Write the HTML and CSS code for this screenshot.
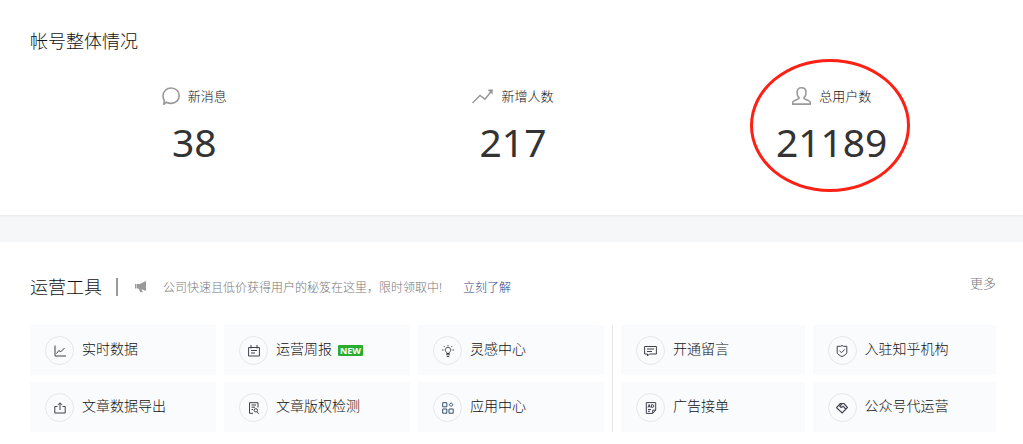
FILE: index.html
```html
<!DOCTYPE html>
<html lang="zh-CN">
<head>
<meta charset="utf-8">
<meta name="viewport" content="width=device-width, initial-scale=1">
<title>帐号整体情况</title>
<link rel="stylesheet" href="styles.css">
</head>
<body>
<section class="panel overview">
  <h2 class="title">帐号整体情况</h2>
  <div class="stats">
    <div class="stat">
      <div class="stat-label">
        <svg class="stat-icon" width="18" height="18" viewBox="0 0 18 18"><path d="M2.300 13.500C1.400 12 1 10.600 1 9C1 4.300 4.500 1 9.200 1C14 1 17.200 4.500 17.200 8.700C17.200 13 13.800 16.400 9.200 16.400C7.200 16.400 5.700 16 4.300 15.300L1.800 17.200L2.300 13.500Z" fill="none" stroke="#999" stroke-width="1.600"/></svg>
        <span>新消息</span>
      </div>
      <strong class="stat-value">38</strong>
    </div>
    <div class="stat">
      <div class="stat-label">
        <svg class="stat-icon" width="21" height="15" viewBox="0 0 21 15"><path d="M.5 14L8 6.500L13 10.200L19.500 2" fill="none" stroke="#999" stroke-width="1.500"/><path d="M15.500.8L20.800.3L20.600 5.500Z" fill="#999"/></svg>
        <span>新增人数</span>
      </div>
      <strong class="stat-value">217</strong>
    </div>
    <div class="stat marked">
      <div class="stat-label">
        <svg class="stat-icon" width="19" height="18" viewBox="0 0 19 18"><path d="M7.200 11.200C5.600 9.700 5 7.700 5 5.300C5 2.400 6.700.8 9.500.8S14 2.400 14 5.300C14 7.700 13.400 9.700 11.800 11.200C12 12.500 18.200 13.200 18.200 15.300V17.100H.8V15.300C.8 13.200 7 12.500 7.200 11.200Z" fill="none" stroke="#999" stroke-width="1.600"/></svg>
        <span>总用户数</span>
      </div>
      <strong class="stat-value">21189</strong>
    </div>
  </div>
</section>

<section class="panel tools">
  <header class="tools-head">
    <h2 class="title">运营工具</h2>
    <span class="bar"></span>
    <svg class="horn" width="12" height="12" viewBox="0 0 12 12" fill="#999"><path d="M0 3H1V7.500H0ZM1.500 3H5L9.800.6V9.400L5 7.500H1.500ZM9.800.3H11V9.800H9.800ZM3.500 7.500H6L8 11.200H5.500Z"/></svg>
    <p class="notice">公司快速且低价获得用户的秘笈在这里，限时领取中!</p>
    <a class="learn" href="#">立刻了解</a>
    <a class="more" href="#">更多</a>
  </header>
  <div class="groups">
    <div class="group three">
      <a class="card" href="#"><span class="disc"><svg width="12" height="12" viewBox="0 0 12 12"><path d="M1 .5V11H12M2.500 8.500L4.800 5.500L6.800 6.800L10.500 3"/></svg></span><span class="name">实时数据</span></a>
      <a class="card" href="#"><span class="disc"><svg width="12" height="12" viewBox="0 0 12 12"><path d="M.6 2.500H11.400V11H.6ZM3 0V3.500M9 0V3.500M3 5.500H9M3 8H7"/></svg></span><span class="name">运营周报</span><span class="new">NEW</span></a>
      <a class="card" href="#"><span class="disc"><svg width="12" height="12" viewBox="0 0 12 12"><path d="M4.700 8.500V7.300A2.700 2.700 0 1 1 7.300 7.300V8.500ZM4.200 9.700H7.800M4.800 11.500H7.200M6 0V1M2 1.200L2.800 2M10 1.200L9.200 2M0 5H1.500M10.500 5H12"/></svg></span><span class="name">灵感中心</span></a>
      <a class="card" href="#"><span class="disc"><svg width="12" height="12" viewBox="0 0 12 12"><path d="M3.500 4.500H.8V11H11.200V4.500H8.500M6 8V1M3.800 3L6 .8L8.200 3"/></svg></span><span class="name">文章数据导出</span></a>
      <a class="card" href="#"><span class="disc"><svg width="12" height="12" viewBox="0 0 12 12"><path d="M5 11.300H1.500V.7H10V5.500M3.500 3H8M3.500 5.200H7M3.500 7.500H5M9 9.800L10.800 11.800"/><circle cx="7.800" cy="8.300" r="1.700"/></svg></span><span class="name">文章版权检测</span></a>
      <a class="card" href="#"><span class="disc"><svg class="blue" width="12" height="12" viewBox="0 0 12 12"><path d="M.7.7H4.800V4.800H.7ZM.7 7H4.800V11.200H.7ZM7 7H11.200V11.200H7ZM9.100.8L11 2.700L9.100 4.600L7.200 2.700Z"/></svg></span><span class="name">应用中心</span></a>
    </div>
    <div class="divider"></div>
    <div class="group two">
      <a class="card" href="#"><span class="disc"><svg width="13" height="12" viewBox="0 0 13 12"><path d="M.6 1.500H12.400V9H5.500L3.500 11V9H.6ZM3 4H10M3 6.500H8"/></svg></span><span class="name">开通留言</span></a>
      <a class="card" href="#"><span class="disc"><svg width="12" height="12" viewBox="0 0 12 12"><path d="M6 .5L7.500 1.300H10.800V7.500C10.800 9.500 8 10.400 6 11.600C4 10.400 1.200 9.500 1.200 7.500V1.300H4.500ZM3.500 5.800L5.500 7.700L8.700 4.300"/></svg></span><span class="name">入驻知乎机构</span></a>
      <a class="card" href="#"><span class="disc"><svg width="12" height="12" viewBox="0 0 12 12"><path d="M1.300.6H10.700V8.200L7.700 11.400H1.300ZM7.700 11.400V8.200H10.700M3 7.500H6M3 9.300H5M3 5.500L4.200 2.500L5.400 5.500M3.500 4.600H5M6.600 2.600V5.400H7.500C9.300 5.400 9.300 2.600 7.500 2.600Z"/></svg></span><span class="name">广告接单</span></a>
      <a class="card" href="#"><span class="disc"><svg class="bold" width="12" height="12" viewBox="0 0 12 12"><path d="M.5 5.700L4.300 1.500H8L11.500 5.500L6.200 11ZM6.200 1.700L3.800 4.200L5.200 5.500L7 4.200L9.800 7"/></svg></span><span class="name">公众号代运营</span></a>
    </div>
  </div>
</section>
</body>
</html>
```
FILE: styles.css
```css
*,
*::after {
  box-sizing: border-box;
}

body {
  margin: 0;
  background: #f6f7f9;
  color: #111;
  font-family: "Noto Sans", "Noto Sans CJK SC", sans-serif;
  font-size: 14px;
  font-weight: 300;
}

a {
  color: inherit;
  text-decoration: none;
}

svg {
  flex: none;
}

.panel {
  background: #fff;
}

.title {
  margin: 0;
  font-size: 18px;
  font-weight: 300;
  line-height: 26px;
}

.overview {
  padding: 28px 0 49px;
  box-shadow: 0 1px 2px rgba(0, 0, 0, 0.06);
}

.overview .title {
  padding: 0 30px;
}

.stats {
  display: grid;
  grid-template-columns: repeat(3, 1fr);
  margin-top: 32px;
  padding: 0 32px 0 35px;
}

.stat {
  position: relative;
  display: flex;
  flex-direction: column;
  align-items: center;
}

.stat-label {
  display: flex;
  align-items: center;
  gap: 8px;
  height: 20px;
  font-size: 13px;
  line-height: 20px;
}

.stat-value {
  margin-top: 12px;
  color: #333;
  font-size: 39px;
  font-weight: 400;
  line-height: 48px;
}

.marked::after {
  content: "";
  position: absolute;
  top: -27px;
  left: 50%;
  width: 160px;
  height: 133px;
  margin-left: -82px;
  border: 3px solid #fd2014;
  border-radius: 50%;
}

.tools {
  margin-top: 27px;
  padding: 32px 27px 24px 30px;
}

.tools-head {
  display: flex;
  align-items: center;
  height: 26px;
}

.bar {
  width: 2px;
  height: 18px;
  margin: 0 17px 0 14px;
  background: #999;
}

.notice {
  margin: 0 21px 0 16px;
  color: #777;
  font-size: 12px;
}

.learn {
  color: #2f4685;
  font-size: 12px;
}

.more {
  align-self: flex-start;
  margin-left: auto;
  color: #777;
  font-size: 13px;
  line-height: 18px;
}

.groups {
  display: grid;
  grid-template-columns: 574fr 1px 375fr;
  gap: 8px;
  margin-top: 25px;
}

.group {
  display: grid;
  gap: 7px 8px;
}

.three {
  grid-template-columns: repeat(3, 1fr);
}

.two {
  grid-template-columns: repeat(2, 1fr);
}

.divider {
  background: #e4e6e9;
}

.card {
  display: flex;
  align-items: center;
  padding: 11px 15px 10px;
  background: #fafbfd;
  white-space: nowrap;
}

.name {
  padding-bottom: 4px;
  line-height: 20px;
}

.disc {
  display: flex;
  flex: none;
  align-items: center;
  justify-content: center;
  width: 29px;
  height: 29px;
  margin-right: 8px;
  border: 1px solid #e6e7ea;
  border-radius: 50%;
}

.disc svg {
  fill: none;
  stroke: #3f414b;
  stroke-width: 1;
}

.disc .blue {
  stroke: #36506b;
}

.disc .bold {
  stroke-width: 1.2;
}

.new {
  margin-left: 6px;
  padding: 0 2px;
  border-radius: 1px;
  background: #2aad2e;
  color: #fff;
  font-size: 9px;
  font-weight: 700;
  line-height: 11px;
}
```
